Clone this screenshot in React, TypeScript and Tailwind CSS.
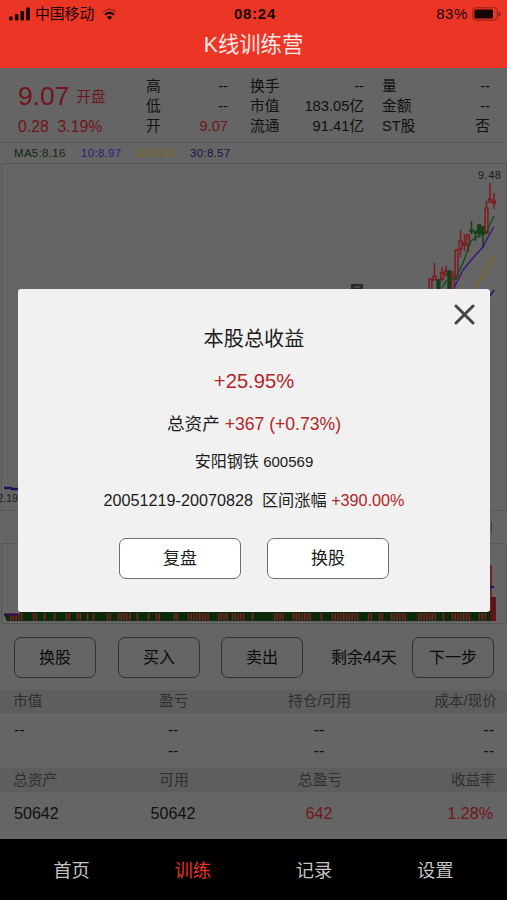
import { useState } from 'react';

type Candle = {
  x: number;
  high: number;
  low: number;
  top: number;
  bottom: number;
  up: boolean;
};

const RED = '#7c1a20';
const GREEN = '#143f17';

const candles: Candle[] = [
  { x: 430.5, high: 279, low: 300, top: 279, bottom: 300, up: true },
  { x: 434.5, high: 263, low: 280, top: 276, bottom: 280, up: true },
  { x: 438.5, high: 279, low: 300, top: 280, bottom: 300, up: false },
  { x: 442, high: 267, low: 281, top: 273, bottom: 279, up: true },
  { x: 446, high: 266, low: 277, top: 271, bottom: 274, up: true },
  { x: 449.5, high: 271, low: 300, top: 271, bottom: 300, up: false },
  { x: 453, high: 271, low: 300, top: 276, bottom: 300, up: true },
  { x: 456.5, high: 249, low: 280, top: 250, bottom: 276, up: true },
  { x: 460.5, high: 230, low: 257, top: 241, bottom: 249, up: true },
  { x: 464.5, high: 234, low: 251, top: 243, bottom: 245, up: true },
  { x: 468, high: 234, low: 252, top: 235, bottom: 245, up: true },
  { x: 471.5, high: 221, low: 234, top: 230, bottom: 231, up: false },
  { x: 475.5, high: 230, low: 241, top: 232, bottom: 233, up: false },
  { x: 479, high: 224, low: 237, top: 225, bottom: 233, up: false },
  { x: 483, high: 226, low: 248, top: 227, bottom: 234, up: false },
  { x: 486.5, high: 201, low: 234, top: 208, bottom: 233, up: true },
  { x: 490, high: 183, low: 202, top: 199, bottom: 202, up: true },
  { x: 494, high: 193, low: 209, top: 201, bottom: 203, up: true },
];

// red volume bars along the bottom, [x, count]
const volumeRuns = [
  [10, 5], [33, 2], [44, 1], [54, 1], [66, 2], [77, 2], [87, 1], [93, 1], [107, 2],
  [118, 5], [137, 1], [148, 1], [156, 2], [174, 2], [188, 8], [218, 4], [232, 5],
  [252, 1], [274, 4], [293, 7], [321, 1], [332, 10], [368, 2], [379, 2], [391, 6],
  [418, 7], [443, 1], [452, 7], [479, 3],
];

const quotes = [
  [{ label: '高', value: '--' }, { label: '换手', value: '--' }, { label: '量', value: '--' }],
  [{ label: '低', value: '--' }, { label: '市值', value: '183.05亿' }, { label: '金额', value: '--' }],
  [{ label: '开', value: '9.07', red: true }, { label: '流通', value: '91.41亿' }, { label: 'ST股', value: '否' }],
];

const tabs = ['首页', '训练', '记录', '设置'];

const StatusBar = () => (
  <div className="h-[27px] flex items-center justify-between pl-[9px] pr-[6px] text-[14px] text-[#190504]">
    <div className="flex-1 flex items-center">
      <svg width="22" height="14" viewBox="0 0 22 14" fill="currentColor">
        <rect x="0" y="9.5" width="3.6" height="4" rx="1" />
        <rect x="5.8" y="7" width="3.6" height="6.5" rx="1" />
        <rect x="11.4" y="4" width="3.6" height="9.5" rx="1" />
        <rect x="17" y="0.5" width="3.8" height="13" rx="1" />
      </svg>
      <span className="ml-[4px] pt-px text-[14.8px]">中国移动</span>
      <svg className="ml-[8px]" width="15" height="12" viewBox="0 0 15 12" fill="none" stroke="currentColor">
        <path d="M0.8 4.2a9.6 9.6 0 0 1 13.4 0" strokeWidth="1.8" opacity="0.3" />
        <path d="M3.1 6.7a6.3 6.3 0 0 1 8.8 0" strokeWidth="2.1" />
        <path d="M7.5 12 L4.9 9.2 a3.7 3.7 0 0 1 5.2 0z" fill="currentColor" stroke="none" />
      </svg>
    </div>
    <span className="pt-px font-bold text-[15px] tracking-[0.7px]">08:24</span>
    <div className="flex-1 flex items-center justify-end">
      <span className="pt-px text-[15px] tracking-[0.6px]">83%</span>
      <svg className="ml-[4px]" width="29" height="14" viewBox="0 0 29 14">
        <rect x="0.8" y="0.8" width="24.5" height="12.4" rx="3" fill="none" stroke="#8d2018" strokeWidth="1" />
        <rect x="2.4" y="2.4" width="18.6" height="9.2" rx="1.5" fill="#190504" />
        <path d="M26.7 4.6v4.8q2-.8 2-2.4t-2-2.4z" fill="#8d2018" />
      </svg>
    </div>
  </div>
);

const PriceChart = () => (
  <svg width="507" height="349" viewBox="0 163 507 349" className="block">
    <path d="M1.5 510.5V163.5H506M506.5 163V511M0 510.5H507" fill="none" stroke="#575757" />
    <text x="478" y="179" fontSize="11" letterSpacing="0.5" fill="#1c1c1c">9.48</text>
    <rect x="351" y="284" width="12" height="12" fill="#2b2b2b" />
    <path d="M354 287h6" stroke="#666" />
    {candles.map((c) => (
      <g key={c.x} stroke={c.up ? RED : GREEN} strokeWidth="1.5">
        <line x1={c.x} x2={c.x} y1={c.high} y2={c.low} />
        <rect
          x={c.x - 1.4}
          y={c.top}
          width="2.8"
          height={c.bottom - c.top}
          fill={c.up ? '#656565' : GREEN}
        />
      </g>
    ))}
    <g fill="none" strokeWidth="1.4">
      <path d="M442 288L447 280L455 279L463 263L471 241L475 238L486 233L494 216" stroke="#174c1a" />
      <path d="M454 288L463 270L473 258L483 247L489 235L494 227" stroke="#35197b" />
      <path d="M475 289L485 272L494 256" stroke="#80691c" />
      <path d="M490 296L494 290" stroke="#181866" />
    </g>
    <path d="M4 488H11L12 489H20" fill="none" stroke="#250c59" strokeWidth="2.4" />
    <text x="-2.5" y="502" fontSize="10.5" fill="#1c1c1c">2.19</text>
  </svg>
);

const VolumeChart = () => (
  <svg width="507" height="81" viewBox="0 543 507 81" className="block">
    <path d="M1.5 623.5V543.5H506.5V623.5Z" fill="none" stroke="#575757" />
    <path d="M4 614H20V611H491V621H7Z" fill="#0b2a0b" />
    {volumeRuns.map(([x, count]) =>
      Array.from({ length: count }, (_, i) => (
        <line key={x + i * 3} x1={x + i * 2.8 + 0.5} x2={x + i * 2.8 + 0.5} y1="613" y2="620.5" stroke="#762524" strokeWidth="1.6" />
      ))
    )}
    <path d="M4 614.5H18" stroke="#250c59" strokeWidth="2" />
    <path d="M491 565V621M495.2 597V621" stroke="#6b1011" strokeWidth="1.4" />
    <rect x="491" y="597" width="4" height="24" fill="#5a1516" />
    <path d="M490 587h4" stroke="#181866" strokeWidth="2" />
  </svg>
);

const ActionButton = ({ label }: { label: string }) => (
  <button className="w-[82px] h-[41px] rounded-[7px] border-[1.5px] border-[#303030] text-[16px] text-[#0b0b0b] flex items-center justify-center">
    {label}
  </button>
);

const Dialog = ({ onClose }: { onClose: () => void }) => (
  <div className="absolute left-[18px] top-[289px] w-[472px] h-[323px] rounded-[3px] bg-[#f1f1f1] text-[#1c1c1c] flex flex-col items-center">
    <button onClick={onClose} className="absolute right-[15px] top-[15px]">
      <svg width="21" height="21" viewBox="0 0 21 21" stroke="#454545" strokeWidth="3" strokeLinecap="round">
        <path d="M2 2L19 19M19 2L2 19" />
      </svg>
    </button>
    <h2 className="mt-[35px] h-[30px] leading-[30px] text-[20.2px]">本股总收益</h2>
    <p className="mt-[13px] h-[28px] leading-[28px] text-[20.2px] text-[#b22528]">+25.95%</p>
    <p className="mt-[16px] h-[26px] leading-[26px] text-[17.6px] whitespace-pre">
      总资产 <span className="text-[#b22528]">+367 (+0.73%)</span>
    </p>
    <p className="mt-[13px] h-[24px] leading-[24px] text-[16px] whitespace-pre">安阳钢铁 <span className="text-[15px]">600569</span></p>
    <p className="mt-[14px] h-[24px] leading-[24px] text-[16.2px] whitespace-pre">
      20051219-20070828  区间涨幅 <span className="text-[#b22528]">+390.00%</span>
    </p>
    <div className="mt-[26px] flex gap-[26px]">
      <button className="w-[122px] h-[41px] rounded-[7px] border-[1.5px] border-[#6f6f6f] bg-white text-[17px]">复盘</button>
      <button className="w-[122px] h-[41px] rounded-[7px] border-[1.5px] border-[#6f6f6f] bg-white text-[17px]">换股</button>
    </div>
  </div>
);

export default function App() {
  const [open, setOpen] = useState(true);
  const [active, setActive] = useState('训练');

  return (
    <div className="relative w-[507px] h-[900px] overflow-hidden flex flex-col bg-[#656565] text-[#111111] font-['Liberation_Sans','Noto_Sans_CJK_SC',sans-serif]">
      <header className="h-[68px] bg-[#eb3626]">
        <StatusBar />
        <h1 className="h-[36px] leading-[36px] text-center text-[21.3px] text-[#ffe9e6]">K线训练营</h1>
      </header>

      <section className="h-[75px] flex border-b border-[#575757]">
        <div className="w-[146px] pl-[18px] pt-[12px] text-[#70161b]">
          <div className="h-[34px] flex items-center">
            <span className="text-[26.5px]">9.07</span>
            <span className="ml-[7px] pt-[2px] text-[14.5px]">开盘</span>
          </div>
          <div className="mt-[2px] h-[22px] leading-[22px] text-[15.8px] whitespace-pre">0.28  3.19%</div>
        </div>
        <div className="pt-[8px] text-[14.7px]">
          {quotes.map((row, i) => (
            <div key={i} className="h-[20px] leading-[20px] grid grid-cols-[82px_114px_108px] gap-x-[22px] whitespace-nowrap">
              {row.map((q, j) => (
                <div key={q.label} className={j === 2 ? 'flex justify-between -ml-[4px] mr-[4px]' : 'flex justify-between'}>
                  <span>{q.label}</span>
                  <span className={'red' in q ? 'text-[#70161b]' : ''}>{q.value}</span>
                </div>
              ))}
            </div>
          ))}
        </div>
      </section>

      <div className="h-[20px] pt-[2px] pl-[14px] flex items-center text-[11.5px] tracking-[0.3px]">
        <span className="w-[67px] text-[#12290f]">MA5:8.16</span>
        <span className="w-[54px] text-[#35197b]">10:8.97</span>
        <span className="w-[55px] text-[#80691c]">20:8.93</span>
        <span className="text-[#15154d]">30:8.57</span>
      </div>

      <PriceChart />
      <div className="h-[31px] flex justify-end items-center pr-[15px]">
        <span className="w-px h-[11px] bg-[#3a4248]" />
      </div>
      <VolumeChart />

      <div className="h-[66px] pt-[13px] pl-[14px] pr-[13px] flex">
        <ActionButton label="换股" />
        <div className="ml-[22px]"><ActionButton label="买入" /></div>
        <div className="ml-[21px]"><ActionButton label="卖出" /></div>
        <span className="flex-1 h-[41px] leading-[41px] pl-[28px] text-[16px] text-[#0b0b0b] whitespace-nowrap">剩余44天</span>
        <ActionButton label="下一步" />
      </div>

      <div className="h-[23px] px-[13px] grid grid-cols-[87px_147px_145px_1fr] items-center bg-[#5e5e5e] text-[14.7px] text-[#2f2f2f]">
        <span>市值</span>
        <span className="text-center">盈亏</span>
        <span className="text-center">持仓/可用</span>
        <span className="text-right -mr-[3px]">成本/现价</span>
      </div>
      <div className="h-[55px] pt-[6px] px-[14px] grid grid-cols-[86px_146px_146px_1fr] grid-rows-[21px_21px] items-center text-[16px]">
        <span>--</span>
        <span className="text-center">--</span>
        <span className="text-center">--</span>
        <span className="text-right -mr-[1px]">--</span>
        <span />
        <span className="text-center">--</span>
        <span className="text-center">--</span>
        <span className="text-right -mr-[1px]">--</span>
      </div>
      <div className="h-[24px] pt-px px-[13px] grid grid-cols-[87px_148px_144px_1fr] items-center bg-[#5e5e5e] text-[14.7px] text-[#2f2f2f]">
        <span>总资产</span>
        <span className="text-center">可用</span>
        <span className="text-center">总盈亏</span>
        <span className="text-right -mr-[1px]">收益率</span>
      </div>
      <div className="h-[47px] pb-[5px] px-[14px] grid grid-cols-[86px_146px_146px_1fr] items-center text-[16.1px]">
        <span>50642</span>
        <span className="text-center">50642</span>
        <span className="text-center text-[#70161b]">642</span>
        <span className="text-right text-[#70161b]">1.28%</span>
      </div>

      <nav className="h-[61px] pt-[3px] px-[11px] grid grid-cols-4 items-center bg-black text-[18.3px]">
        {tabs.map((tab) => (
          <button
            key={tab}
            onClick={() => setActive(tab)}
            className={tab === active ? 'text-[#e63325]' : 'text-[#c4c4c4]'}
          >
            {tab}
          </button>
        ))}
      </nav>

      {open && <Dialog onClose={() => setOpen(false)} />}
    </div>
  );
}
